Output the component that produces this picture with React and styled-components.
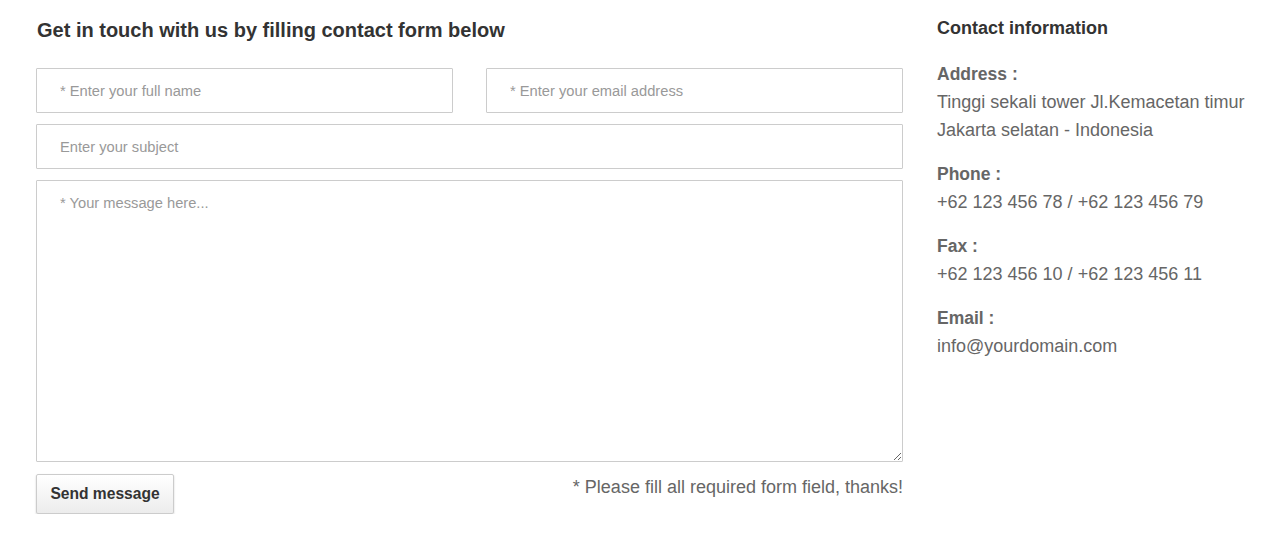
import React from 'react'
import styled, { createGlobalStyle } from 'styled-components'

const GlobalStyle = createGlobalStyle`
    body {
        margin: 0;
        background: #fff;
        font-family: "Liberation Sans", Arial, sans-serif;
    }
`

const Page = styled.div`
    display: flex;
    gap: 34px;
    padding: 14px 0 0 36px;
`

const FormColumn = styled.div`
    width: 867px;
    display: flex;
    flex-direction: column;
`

const Title = styled.h3`
    margin: 2px 0 0 1px;
    font-size: 20px;
    line-height: 28px;
    font-weight: bold;
    color: #333;
`

const Row = styled.div`
    display: flex;
    gap: 33px;
    margin-top: ${p => p.top || 11}px;
`

const Input = styled.input`
    flex: 1;
    min-width: 0;
    height: 45px;
    box-sizing: border-box;
    border: 1px solid #ccc;
    border-radius: 1px;
    padding: 0 23px;
    font-family: "Liberation Sans", Arial, sans-serif;
    font-size: 14.7px;
    color: #555;
    outline: none;
    &::placeholder {
        color: #999;
    }
`

const TextArea = styled.textarea`
    flex: 1;
    height: 282px;
    box-sizing: border-box;
    border: 1px solid #ccc;
    border-radius: 1px;
    padding: 14px 23px;
    font-family: "Liberation Sans", Arial, sans-serif;
    font-size: 14.7px;
    color: #555;
    outline: none;
    &::placeholder {
        color: #999;
    }
`

const Footer = styled.div`
    display: flex;
    justify-content: space-between;
    align-items: flex-start;
    margin-top: 12px;
`

const Button = styled.button`
    width: 138px;
    height: 40px;
    border: 1px solid #ccc;
    border-radius: 2px;
    background: linear-gradient(#fff, #ececec);
    box-shadow: 0 1px 2px rgba(0, 0, 0, 0.2);
    font-family: "Liberation Sans", Arial, sans-serif;
    font-size: 15.6px;
    font-weight: bold;
    color: #333;
    cursor: pointer;
`

const Note = styled.p`
    margin: 1px 0 0 0;
    font-size: 18px;
    line-height: 24px;
    color: #666;
`

const InfoColumn = styled.div`
    display: flex;
    flex-direction: column;
    padding-top: 3px;
`

const InfoTitle = styled.h4`
    margin: 0 0 21px 0;
    font-size: 18px;
    line-height: 22px;
    font-weight: bold;
    color: #333;
`

const InfoBlock = styled.div`
    margin-bottom: 16px;
    font-size: 18px;
    line-height: 28px;
    color: #666;
`

const Label = styled.div`
    font-weight: bold;
    font-size: 17.5px;
`

const info = [
    { label: 'Address :', lines: ['Tinggi sekali tower Jl.Kemacetan timur', 'Jakarta selatan - Indonesia'] },
    { label: 'Phone :', lines: ['+62 123 456 78 / +62 123 456 79'] },
    { label: 'Fax :', lines: ['+62 123 456 10 / +62 123 456 11'] },
    { label: 'Email :', lines: ['info@yourdomain.com'] },
]

export default function App() {
    return (
        <>
            <GlobalStyle />
            <Page>
                <FormColumn>
                    <Title>Get in touch with us by filling contact form below</Title>
                    <Row top={24}>
                        <Input placeholder="* Enter your full name" />
                        <Input placeholder="* Enter your email address" />
                    </Row>
                    <Row>
                        <Input placeholder="Enter your subject" />
                    </Row>
                    <Row>
                        <TextArea placeholder="* Your message here..." />
                    </Row>
                    <Footer>
                        <Button>Send message</Button>
                        <Note>* Please fill all required form field, thanks!</Note>
                    </Footer>
                </FormColumn>
                <InfoColumn>
                    <InfoTitle>Contact information</InfoTitle>
                    {info.map((item) => (
                        <InfoBlock key={item.label}>
                            <Label>{item.label}</Label>
                            {item.lines.map((line) => (
                                <div key={line}>{line}</div>
                            ))}
                        </InfoBlock>
                    ))}
                </InfoColumn>
            </Page>
        </>
    )
}
